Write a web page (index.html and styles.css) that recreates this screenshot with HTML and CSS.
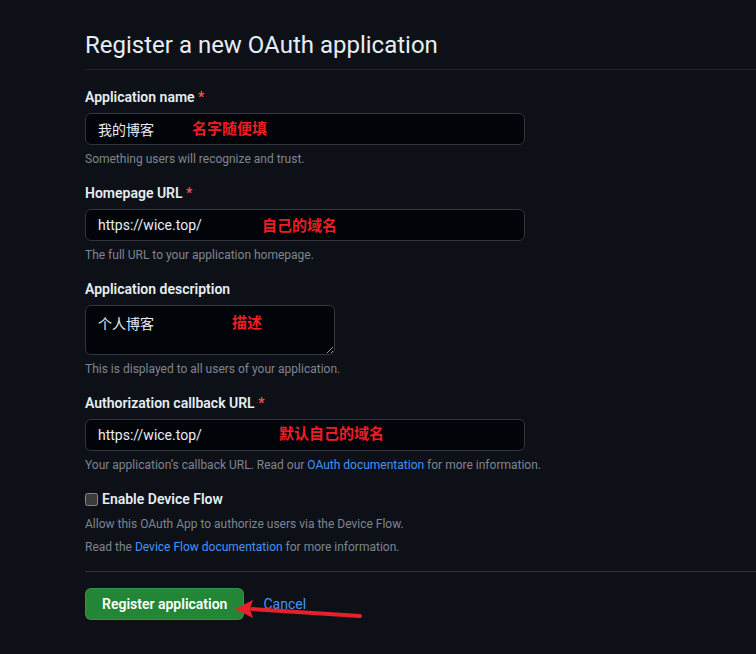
FILE: index.html
```html
<!DOCTYPE html>
<html lang="en">
<head>
<meta charset="utf-8">
<title>Register a new OAuth application</title>
<link rel="stylesheet" href="styles.css">
</head>
<body>
<div class="page">
  <div class="subhead">
    <h1 class="subhead-title">Register a new OAuth application</h1>
  </div>
  <form class="form">
    <div class="group">
      <label class="label">Application name <span class="req">*</span></label>
      <div class="field">
        <input class="input" type="text" value="我的博客">
        <span class="note-red note-1">名字随便填</span>
      </div>
      <p class="hint">Something users will recognize and trust.</p>
    </div>
    <div class="group">
      <label class="label">Homepage URL <span class="req">*</span></label>
      <div class="field">
        <input class="input" type="text" value="https://wice.top/">
        <span class="note-red note-2">自己的域名</span>
      </div>
      <p class="hint">The full URL to your application homepage.</p>
    </div>
    <div class="group">
      <label class="label">Application description</label>
      <div class="field">
        <textarea class="textarea">个人博客</textarea>
        <span class="note-red note-3">描述</span>
      </div>
      <p class="hint">This is displayed to all users of your application.</p>
    </div>
    <div class="group">
      <label class="label">Authorization callback URL <span class="req">*</span></label>
      <div class="field">
        <input class="input" type="text" value="https://wice.top/">
        <span class="note-red note-4">默认自己的域名</span>
      </div>
      <p class="hint">Your application’s callback URL. Read our <a class="link" href="#">OAuth documentation</a> for more information.</p>
    </div>
    <div class="group group-check">
      <label class="check-label"><input class="checkbox" type="checkbox"> Enable Device Flow</label>
      <p class="hint hint-check">Allow this OAuth App to authorize users via the Device Flow.</p>
      <p class="hint hint-check2">Read the <a class="link" href="#">Device Flow documentation</a> for more information.</p>
    </div>
    <div class="actions">
      <button class="btn-primary" type="button">Register application</button>
      <a class="cancel" href="#">Cancel</a>
      <svg class="arrow" width="140" height="30" viewBox="0 0 140 30">
        <path d="M130 21 L22 14" stroke="#e8202a" stroke-width="4" stroke-linecap="round" fill="none"/>
        <path d="M5 14 L23 5 L20 14 L23 23 Z" fill="#e8202a"/>
      </svg>
    </div>
  </form>
</div>
</body>
</html>
```

FILE: styles.css
```css
html, body {
  margin: 0;
  padding: 0;
  background: #0d1117;
  color-scheme: dark;
}
body {
  font-family: Roboto, "Noto Sans CJK SC", sans-serif;
  color: #e6edf3;
  font-size: 14px;
}
.page {
  padding: 30px 0 0 85px;
}
.subhead {
  padding-bottom: 9px;
  border-bottom: 1px solid #21262d;
}
.subhead-title {
  margin: 0;
  font-size: 24px;
  line-height: 30px;
  font-weight: 400;
  color: #e6edf3;
}
.form {
  display: flex;
  flex-direction: column;
  gap: 15px;
  padding-top: 17px;
}
.group {
  display: flex;
  flex-direction: column;
  align-items: flex-start;
}
.label {
  font-size: 14px;
  line-height: 21px;
  font-weight: 600;
  margin-bottom: 5px;
}
.req {
  color: #f85149;
}
.field {
  position: relative;
}
.input {
  box-sizing: border-box;
  width: 440px;
  height: 32px;
  padding: 0 12px;
  background: #010409;
  border: 1px solid #30363d;
  border-radius: 6px;
  color: #e6edf3;
  font-family: Roboto, "Noto Sans CJK SC", sans-serif;
  font-size: 14px;
  outline: none;
  display: block;
}
.textarea {
  box-sizing: border-box;
  width: 250px;
  height: 50px;
  padding: 8px 12px;
  background: #010409;
  border: 1px solid #30363d;
  border-radius: 6px;
  color: #e6edf3;
  font-family: Roboto, "Noto Sans CJK SC", sans-serif;
  font-size: 14px;
  line-height: 20px;
  outline: none;
  display: block;
  resize: vertical;
}
.hint {
  margin: 5px 0 0;
  font-size: 12px;
  line-height: 18px;
  color: #7d8590;
}
.link {
  color: #4493f8;
  text-decoration: none;
}
.note-red {
  position: absolute;
  font-family: "Noto Sans CJK SC", sans-serif;
  font-weight: 700;
  font-size: 15px;
  line-height: 20px;
  color: #ee1d24;
  white-space: nowrap;
}
.note-1 { left: 107px; top: 5px; }
.note-2 { left: 177px; top: 6px; }
.note-3 { left: 147px; top: 7px; }
.note-4 { left: 194px; top: 4px; }
.check-label {
  display: flex;
  align-items: center;
  gap: 4px;
  font-size: 14px;
  line-height: 20px;
  font-weight: 600;
}
.checkbox {
  width: 13px;
  height: 13px;
  margin: 0;
}
.hint-check {
  margin-top: 6px;
}
.hint-check2 {
  margin-top: 5px;
}
.group-check {
  padding-bottom: 15px;
  border-bottom: 1px solid #30363d;
}
.actions {
  position: relative;
  display: flex;
  align-items: center;
  gap: 19px;
  padding-top: 1px;
}
.btn-primary {
  box-sizing: border-box;
  height: 32px;
  padding: 0 16px;
  background: #238636;
  border: 1px solid rgba(240, 246, 252, 0.1);
  border-radius: 6px;
  color: #ffffff;
  font-family: Roboto, sans-serif;
  font-size: 14px;
  font-weight: 600;
}
.cancel {
  color: #4493f8;
  text-decoration: none;
  font-size: 14px;
  line-height: 20px;
}
.arrow {
  position: absolute;
  left: 145px;
  top: 8px;
}
```
